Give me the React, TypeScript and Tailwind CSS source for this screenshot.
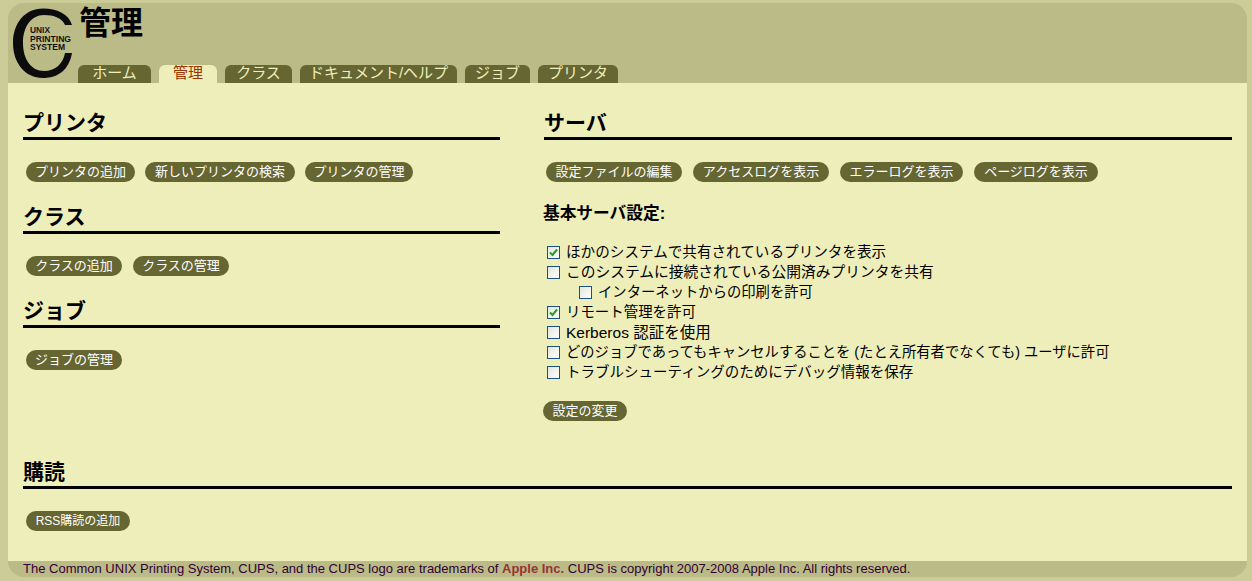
const font = "[font-family:'Liberation_Sans','Noto_Sans_CJK_JP',sans-serif]";

function Logo() {
  const t = { fontWeight: 700, fontFamily: "Liberation Sans", fill: "#111", lengthAdjust: "spacingAndGlyphs" as const };
  return (
    <svg width="64" height="72" viewBox="0 0 64 72" className="shrink-0">
      <path
        d="M59 17 C56 6 44 0.5 30 0.5 C12 0.5 0 15 0 35 C0 55 12 70 30 70 C45 70 56 62 59 45 L52 45 C50 56 42 63 31 63 C18 63 10 51 10 35 C10 19 18 7 31 7 C41 7 49 10 52 17 Z"
        fill="#0c0c0c"
      />
      <text x="17" y="24.5" fontSize="9.5" textLength="20" {...t}>UNIX</text>
      <text x="17" y="33.5" fontSize="9.5" textLength="41" {...t}>PRINTING</text>
      <text x="17" y="42" fontSize="9.5" textLength="35" {...t}>SYSTEM</text>
    </svg>
  );
}

function Tab({ label, w, active }: { label: string; w: string; active?: boolean }) {
  return (
    <a className={`${w} h-[18px] rounded-t-[6px] flex items-center justify-center pb-[2px] text-[15px] leading-[16px] whitespace-nowrap ${active ? "bg-[#eeeebb] text-[#993300]" : "bg-[#666633] text-[#eeeebb]"}`}>
      {label}
    </a>
  );
}

function Btn({ label, w, size = "text-[13px]" }: { label: string; w: string; size?: string }) {
  return (
    <span className={`${w} ${size} h-5 rounded-[10px] bg-[#666633] text-white leading-5 text-center whitespace-nowrap`}>
      {label}
    </span>
  );
}

function Heading({ children }: { children: string }) {
  return (
    <h2 className="h-[31px] border-b-[3px] border-black text-[21px] font-bold leading-[27px] text-black">
      {children}
    </h2>
  );
}

function Check({ label, checked, indent, size }: { label: string; checked?: boolean; indent?: boolean; size: string }) {
  return (
    <div className={`h-5 flex items-center gap-[6px] text-black whitespace-nowrap ${indent ? "pl-[35px]" : "pl-[3px]"}`}>
      <span className="w-[13px] h-[13px] shrink-0 border border-[#1c5180] bg-gradient-to-br from-[#e4e4dc] to-white flex items-center justify-center">
        {checked && (
          <svg width="9" height="9" viewBox="0 0 9 9">
            <path d="M1 4.5 L3.5 7 L8 1.5" fill="none" stroke="#21a121" strokeWidth="2" />
          </svg>
        )}
      </span>
      <span className={`${size} h-5 leading-[21px]`}>{label}</span>
    </div>
  );
}

export default function App() {
  return (
    <div className={`${font} h-[581px] bg-[#cccc99] pt-[3px] pl-2 pr-[5px] pb-1 flex flex-col overflow-hidden`}>
      <header className="h-20 shrink-0 bg-[#bbbb88] rounded-t-[16px] flex pl-[5px] pt-[5px]">
        <Logo />
        <div className="flex flex-col ml-[1px]">
          <h1 className="h-[57px] text-[32px] leading-[30px] pl-[1px] text-black font-bold">管理</h1>
          <nav className="flex gap-2 h-[18px]">
            <Tab label="ホーム" w="w-[73px]" />
            <Tab label="管理" w="w-[58px]" active />
            <Tab label="クラス" w="w-[67px]" />
            <Tab label="ドキュメント/ヘルプ" w="w-[157px]" />
            <Tab label="ジョブ" w="w-[65px]" />
            <Tab label="プリンタ" w="w-[80px]" />
          </nav>
        </div>
      </header>
      <main className="flex-1 bg-[#eeeebb] pl-[15px] pr-[15px] pt-[26px]">
        <div className="flex h-[349px]">
          <div className="w-[477px] flex flex-col">
            <Heading>プリンタ</Heading>
            <div className="flex gap-[10px] pl-[3px] mt-[22px] mb-[21px]">
              <Btn label="プリンタの追加" w="w-[109px]" />
              <Btn label="新しいプリンタの検索" w="w-[150px]" />
              <Btn label="プリンタの管理" w="w-[108px]" />
            </div>
            <Heading>クラス</Heading>
            <div className="flex gap-[11px] pl-[3px] mt-[22px] mb-[21px]">
              <Btn label="クラスの追加" w="w-[96px]" />
              <Btn label="クラスの管理" w="w-[96px]" />
            </div>
            <Heading>ジョブ</Heading>
            <div className="flex pl-[3px] mt-[22px]">
              <Btn label="ジョブの管理" w="w-[96px]" />
            </div>
          </div>
          <div className="ml-[44px] flex-1 flex flex-col">
            <Heading>サーバ</Heading>
            <div className="flex gap-[11px] pl-[2px] mt-[22px]">
              <Btn label="設定ファイルの編集" w="w-[136px]" />
              <Btn label="アクセスログを表示" w="w-[136px]" />
              <Btn label="エラーログを表示" w="w-[123px]" />
              <Btn label="ページログを表示" w="w-[124px]" />
            </div>
            <div className="mt-[22px] -ml-px h-5 text-[16.7px] font-bold leading-5 text-black">基本サーバ設定:</div>
            <div className="mt-[18px]">
              <Check checked label="ほかのシステムで共有されているプリンタを表示" size="text-[14.6px]" />
              <Check label="このシステムに接続されている公開済みプリンタを共有" size="text-[14.75px]" />
              <Check indent label="インターネットからの印刷を許可" size="text-[14.33px]" />
              <Check checked label="リモート管理を許可" size="text-[14.44px]" />
              <Check label="Kerberos 認証を使用" size="text-[15.5px]" />
              <Check label="どのジョブであってもキャンセルすることを (たとえ所有者でなくても) ユーザに許可" size="text-[14.3px]" />
              <Check label="トラブルシューティングのためにデバッグ情報を保存" size="text-[14.5px]" />
            </div>
            <div className="flex mt-[19px] -ml-px">
              <Btn label="設定の変更" w="w-[84px]" />
            </div>
          </div>
        </div>
        <Heading>購読</Heading>
        <div className="flex pl-[3px] mt-[22px]">
          <Btn label="RSS購読の追加" w="w-[104px]" size="text-[12px]" />
        </div>
      </main>
      <footer className="h-4 shrink-0 bg-[#bbbb88] rounded-b-[16px] pl-[15px] text-[13px] leading-4 text-[#330033] whitespace-nowrap">
        The Common UNIX Printing System, CUPS, and the CUPS logo are trademarks of <span className="font-bold text-[#993333]">Apple Inc.</span> CUPS is copyright 2007-2008 Apple Inc. All rights reserved.
      </footer>
    </div>
  );
}
